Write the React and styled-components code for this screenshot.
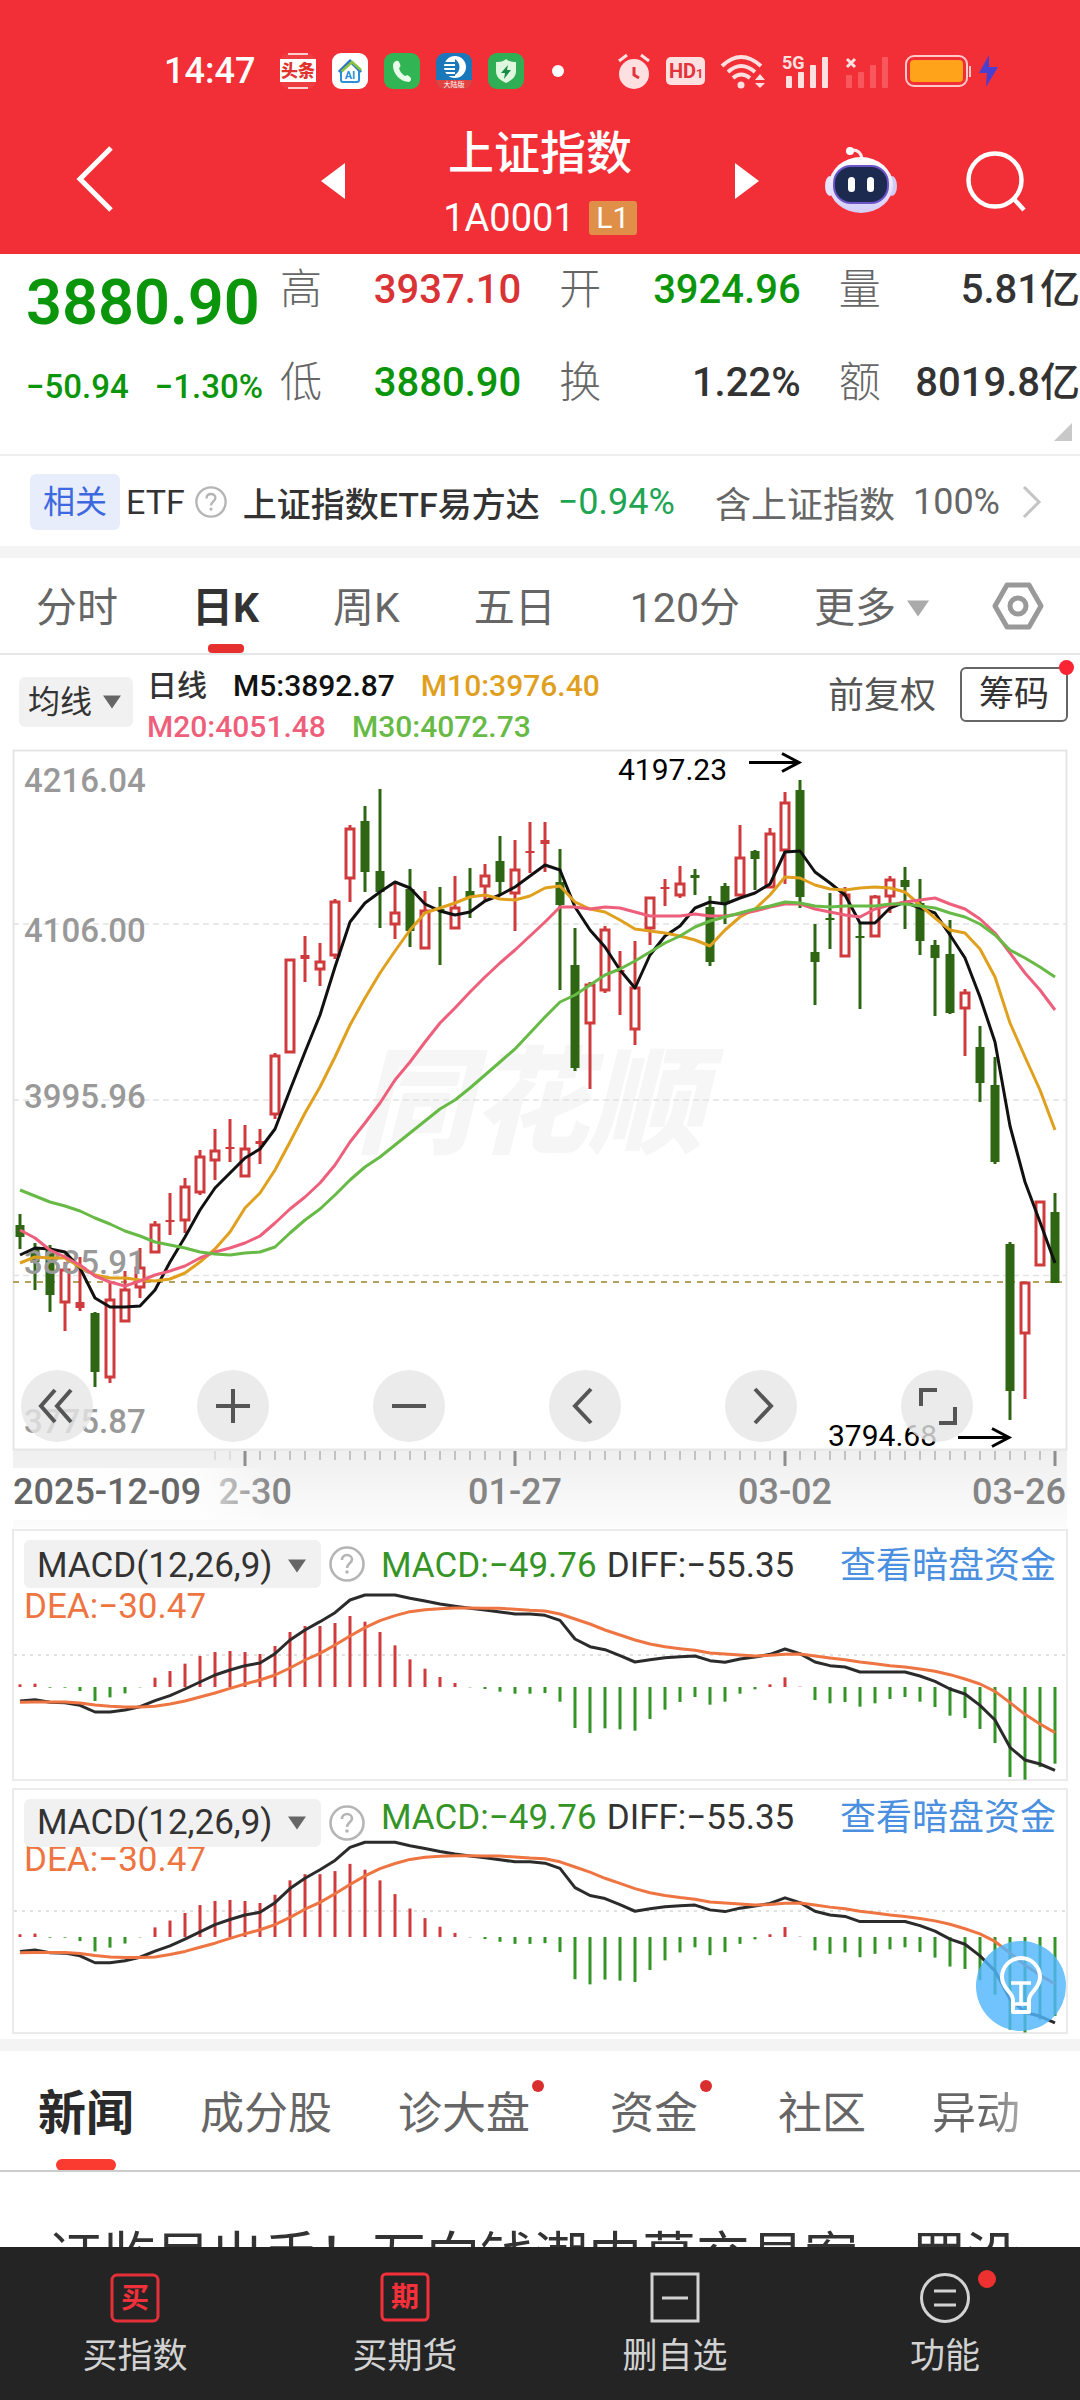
import React from "react";
import styled, { createGlobalStyle, css } from "styled-components";

const GlobalStyle = createGlobalStyle`
  * { box-sizing: border-box; }
  html, body { margin: 0; padding: 0; }
  body {
    background: #fff;
    color: #333;
    font-family: Roboto, "Noto Sans CJK SC", sans-serif;
  }
  button, select, input {
    font: inherit;
    color: inherit;
    margin: 0;
    padding: 0;
    border: 0;
    background: none;
  }
  button { cursor: pointer; }
  a { color: inherit; text-decoration: none; }
  svg { display: block; flex: none; overflow: visible; }
`;

const C = {
  up: "#cf3a3c",
  down: "#2f6614",
  green: "#0a950a",
  red: "#d93335",
  text: "#333",
  sub: "#666",
  m5: "#111",
  m10: "#e0a01e",
  m20: "#ee5f7b",
  m30: "#66ba45",
  diff: "#2b2b2b",
  dea: "#ee7542",
  macd: "#359426",
};

/* ---------- page ---------- */

const Page = styled.div`
  display: flex;
  flex-direction: column;
  height: 100vh;
  overflow: hidden;
`;

const Scroll = styled.main`
  flex: 1;
  min-height: 0;
  overflow-y: auto;
  scrollbar-width: none;
`;

const Band = styled.div`
  height: 12px;
  background: #f4f4f4;
`;

/* ---------- status bar and header ---------- */

const Top = styled.header`
  flex: none;
  background: #f22f37;
  color: #fff;
`;

const StatusBar = styled.div`
  display: flex;
  align-items: center;
  justify-content: space-between;
  height: 94px;
  padding: 48px 80px 0 164px;
`;

const StatusGroup = styled.div`
  display: flex;
  align-items: center;
  gap: 16px;
`;

const Clock = styled.time`
  width: 100px;
  font-size: 36px;
  line-height: 46px;
  font-weight: 500;
`;

const TitleBar = styled.div`
  display: grid;
  grid-template-columns: 1fr auto 1fr;
  align-items: center;
  height: 160px;
  padding: 14px 54px 0;
`;

const IconButton = styled.button`
  display: inline-flex;
  align-items: center;
  justify-content: center;
`;

const TitleBack = styled.div`
  padding-left: 22px;
`;

const TitleCenter = styled.div`
  display: flex;
  align-items: center;
  justify-content: space-between;
  width: 438px;
`;

const TitleText = styled.div`
  display: flex;
  flex-direction: column;
  align-items: center;
  gap: 14px;
  padding-top: 4px;
`;

const Title = styled.h1`
  margin: 0;
  font-size: 46px;
  line-height: 56px;
  font-weight: 500;
`;

const Code = styled.div`
  display: flex;
  align-items: center;
  gap: 14px;
  font-size: 38px;
  line-height: 46px;
`;

const Level = styled.span`
  width: 48px;
  border-radius: 3px;
  background: #e08f48;
  font-size: 30px;
  line-height: 34px;
  text-align: center;
`;

const TitleActions = styled.div`
  display: flex;
  justify-content: flex-end;
  align-items: center;
  gap: 68px;
`;

/* ---------- quote ---------- */

const Quote = styled.section`
  display: grid;
  grid-template-columns: 254px minmax(0, 1fr);
  height: 202px;
  padding-left: 26px;
  border-bottom: 2px solid #eee;
  align-content: start;
`;

const Price = styled.div`
  height: 95px;
  color: ${C.green};
  font-size: 63px;
  line-height: 98px;
  font-weight: 600;
`;

const Change = styled.div`
  display: flex;
  gap: 26px;
  color: ${C.green};
  font-size: 33px;
  line-height: 76px;
  font-weight: 500;
  white-space: nowrap;
`;

const Stats = styled.dl`
  display: grid;
  grid-template-columns: repeat(3, 1fr);
  column-gap: 38px;
  margin: 0;
  padding-top: 12px;
`;

const Stat = styled.div`
  display: flex;
  justify-content: space-between;
  white-space: nowrap;
  line-height: 48px;
  height: 93px;
`;

const StatName = styled.dt`
  color: ${C.sub};
  font-size: 42px;
  font-weight: 300;
`;

const StatValue = styled.dd`
  margin: 0;
  color: ${(p) => p.$color || C.text};
  font-size: 40px;
  font-weight: 500;
`;

const Corner = styled.svg`
  grid-column: 1 / -1;
  justify-self: end;
  margin: -29px 8px 0 0;
`;

/* ---------- related fund ---------- */

const Related = styled.a`
  display: flex;
  align-items: center;
  height: 90px;
  padding: 2px 36px 0 30px;
  white-space: nowrap;
`;

const Tag = styled.span`
  padding: 0 13px;
  margin-right: 6px;
  border-radius: 6px;
  background: #e7edfb;
  color: #3d68e0;
  font-size: 32px;
  line-height: 56px;
`;

const Plain = styled.span`
  margin-right: ${(p) => p.$gap || 0}px;
  color: ${(p) => p.$color || C.text};
  font-size: ${(p) => p.$size || 34}px;
  font-weight: ${(p) => p.$weight || 400};
`;

const Fund = styled(Plain)`
  margin-left: 16px;
`;

/* ---------- period tabs ---------- */

const Periods = styled.nav`
  display: flex;
  align-items: stretch;
  gap: 74px;
  height: 97px;
  padding: 0 36px;
  border-bottom: 2px solid #e6e6e6;
`;

const Period = styled.button`
  display: grid;
  grid-template-rows: 86px 9px;
  justify-items: center;
  align-items: center;
  color: ${(p) => (p.$on ? C.text : C.sub)};
  font-size: 41px;
  font-weight: ${(p) => (p.$on ? 700 : 400)};
  line-height: 60px;
  white-space: nowrap;
  &::after {
    content: "";
    width: 36px;
    height: 9px;
    border-radius: 4px;
    background: ${(p) => (p.$on ? "#e5302f" : "transparent")};
  }
`;

const More = styled.span`
  display: flex;
  align-items: center;
  gap: 11px;
  padding-top: 14px;
`;

const PeriodText = styled.span`
  padding-top: 14px;
`;

const Settings = styled(IconButton)`
  margin-left: -10px;
`;

/* ---------- moving average bar ---------- */

const AverageBar = styled.div`
  display: flex;
  align-items: flex-start;
  height: 95px;
  padding: 12px 12px 0 19px;
`;

const Picker = styled.label`
  display: grid;
  align-items: center;
  width: ${(p) => p.$width}px;
  height: ${(p) => p.$height}px;
  border-radius: 6px;
  background: #f1f1f1;
  & > * { grid-area: 1 / 1; }
  & > svg { justify-self: end; margin-right: ${(p) => p.$inset}px; pointer-events: none; }
`;

const AveragePicker = styled(Picker)`
  margin-top: 10px;
`;

const PickerSelect = styled.select`
  appearance: none;
  width: 100%;
  height: 100%;
  padding-left: ${(p) => p.$pad}px;
  font-size: ${(p) => p.$size}px;
`;

const Legend = styled.div`
  flex: 1;
  display: grid;
  grid-template-rows: 41px 41px;
  padding-left: 14px;
  margin-top: -2px;
`;

const LegendLine = styled.div`
  display: flex;
  gap: 26px;
  font-size: 30px;
  line-height: 41px;
  font-weight: 500;
  white-space: nowrap;
`;

const Tint = styled.span`
  color: ${(p) => p.$color};
`;

const Adjust = styled.button`
  margin-right: 24px;
  color: #555;
  font-size: 36px;
  line-height: 59px;
`;

const Chips = styled.button`
  position: relative;
  width: 108px;
  height: 55px;
  border: 2px solid #666;
  border-radius: 6px;
  font-size: 35px;
  line-height: 51px;
`;

const Dot = styled.span`
  position: absolute;
  top: ${(p) => p.$top}px;
  right: ${(p) => p.$right}px;
  width: ${(p) => p.$size}px;
  height: ${(p) => p.$size}px;
  border-radius: 50%;
  background: ${(p) => p.$color};
`;

/* ---------- charts ---------- */

const ChartBox = styled.section`
  position: relative;
  padding: 0 13px;
  & > svg { width: 100%; height: auto; }
`;

const ChartTools = styled.div`
  position: absolute;
  left: 21px;
  right: 107px;
  bottom: 78px;
  display: flex;
  justify-content: space-between;
`;

const Tool = styled.button`
  display: flex;
  align-items: center;
  justify-content: center;
  width: 72px;
  height: 72px;
  border-radius: 50%;
  background: rgba(230, 230, 230, 0.8);
  color: #555;
`;

const Panels = styled.div`
  display: flex;
  flex-direction: column;
  gap: 7px;
  padding: 9px 12px 5px;
`;

const Panel = styled.section`
  display: grid;
  border: 2px solid #ebebeb;
  & > * { grid-area: 1 / 1; min-width: 0; }
  & > svg { width: 100%; height: auto; }
`;

const PanelHead = styled.div`
  z-index: 1;
  display: flex;
  align-items: flex-start;
  padding: 9px 10px 0;
  font-size: 35px;
  line-height: ${(p) => (p.$tight ? 38 : 52)}px;
  white-space: nowrap;
  align-self: start;
`;

const Help = styled(IconButton)`
  margin: 6px 16px 0 8px;
`;

const Values = styled.div`
  display: flex;
  flex-wrap: wrap;
  gap: 0 10px;
`;

const DeaLine = styled.div`
  align-self: start;
  padding: ${(p) => (p.$tight ? 50 : 56)}px 0 0 10px;
  color: ${C.dea};
  font-size: 35px;
  line-height: 40px;
`;

const DarkPool = styled.a`
  margin-left: auto;
  color: #4a8fe0;
  font-size: 36px;
`;

const PanelArea = styled.div`
  position: relative;
`;

const Bulb = styled.button`
  position: absolute;
  right: 14px;
  bottom: 8px;
  z-index: 2;
  display: flex;
  align-items: center;
  justify-content: center;
  width: 90px;
  height: 90px;
  border-radius: 50%;
  background: rgba(80, 182, 253, 0.82);
`;

/* ---------- news ---------- */

const NewsTabs = styled.nav`
  display: flex;
  gap: 66px;
  height: 121px;
  padding-left: 38px;
  border-bottom: 2px solid #ccc;
  overflow: hidden;
`;

const NewsTab = styled.button`
  position: relative;
  display: grid;
  grid-template-rows: 108px 12px;
  justify-items: center;
  align-items: center;
  flex: none;
  padding-right: ${(p) => (p.$dot ? 14 : 0)}px;
  color: ${(p) => (p.$on ? "#2a2a2a" : C.sub)};
  font-size: ${(p) => (p.$on ? 48 : 44)}px;
  font-weight: ${(p) => (p.$on ? 700 : 400)};
  line-height: 60px;
  ${(p) =>
    p.$fade &&
    css`
      background: linear-gradient(90deg, #666 60%, #aaa);
      background-clip: text;
      color: transparent;
    `}
  &::after {
    content: "";
    width: 60px;
    height: 12px;
    border-radius: 6px;
    background: ${(p) => (p.$on ? "#fb3b30" : "transparent")};
  }
`;

const NewsLabel = styled.span`
  padding-top: 17px;
`;

const Headline = styled.a`
  display: block;
  padding: 51px 48px 0;
  font-size: 54px;
  line-height: 72px;
`;

/* ---------- bottom bar ---------- */

const BottomBar = styled.nav`
  flex: none;
  display: grid;
  grid-template-columns: repeat(4, 1fr);
  height: 153px;
  background: #242424;
  color: #d2d2d2;
`;

const BottomItem = styled.button`
  display: flex;
  flex-direction: column;
  align-items: center;
  gap: 12px;
  padding-top: 26px;
  font-size: 35px;
  line-height: 44px;
`;

const BottomIcon = styled.span`
  position: relative;
  display: block;
`;

/* ---------- market data ---------- */

/* kind, high, body top, body bottom, low: "u" rising, "d" falling */
const CANDLES = [
  ["d", 1214, 1226, 1237, 1249], ["d", 1243, 1250, 1262, 1290], ["d", 1245, 1250, 1295, 1312],
  ["u", 1262, 1270, 1302, 1331], ["u", 1257, 1303, 1308, 1311], ["d", 1312, 1314, 1372, 1387],
  ["u", 1283, 1300, 1377, 1383], ["u", 1271, 1290, 1321, 1321], ["u", 1248, 1268, 1287, 1298],
  ["u", 1221, 1225, 1252, 1252], ["u", 1193, 1221, 1221, 1235], ["u", 1178, 1187, 1220, 1233],
  ["u", 1150, 1157, 1192, 1195], ["u", 1129, 1151, 1160, 1180], ["u", 1119, 1148, 1148, 1162],
  ["u", 1125, 1149, 1176, 1176], ["u", 1129, 1142, 1144, 1164], ["u", 1053, 1056, 1114, 1119],
  ["u", 960, 960, 1052, 1052], ["u", 936, 956, 959, 982], ["u", 943, 962, 969, 986],
  ["u", 899, 902, 955, 959], ["u", 825, 829, 878, 902], ["d", 806, 822, 872, 892],
  ["d", 789, 872, 892, 928], ["u", 883, 913, 924, 939], ["d", 869, 890, 931, 947],
  ["u", 891, 911, 948, 948], ["d", 887, 910, 910, 965], ["u", 876, 908, 928, 928],
  ["d", 868, 892, 897, 918], ["u", 864, 876, 886, 901], ["d", 836, 862, 882, 895],
  ["u", 840, 870, 893, 931], ["u", 822, 852, 852, 873], ["u", 822, 841, 844, 872],
  ["d", 849, 883, 905, 990], ["d", 928, 966, 1068, 1071], ["u", 982, 985, 1023, 1089],
  ["u", 926, 930, 990, 993], ["u", 951, 971, 971, 1015], ["u", 941, 988, 1029, 1045],
  ["u", 897, 898, 928, 945], ["u", 879, 888, 888, 906], ["u", 866, 884, 895, 898],
  ["d", 869, 876, 878, 895], ["d", 896, 908, 962, 966], ["d", 883, 887, 904, 924],
  ["u", 825, 858, 895, 895], ["d", 850, 852, 859, 890], ["u", 828, 834, 887, 887],
  ["u", 792, 803, 850, 884], ["d", 780, 791, 897, 908], ["d", 924, 953, 962, 1005],
  ["d", 893, 919, 919, 949], ["u", 887, 895, 956, 956], ["d", 922, 937, 938, 1009],
  ["u", 895, 897, 936, 936], ["u", 876, 880, 896, 913], ["d", 867, 881, 887, 929],
  ["d", 879, 904, 941, 955], ["d", 940, 946, 958, 1016], ["d", 920, 955, 1013, 1014],
  ["u", 989, 993, 1008, 1056], ["d", 1026, 1048, 1083, 1102], ["d", 1057, 1086, 1162, 1164],
  ["d", 1242, 1245, 1391, 1420], ["u", 1282, 1283, 1333, 1399], ["u", 1201, 1202, 1265, 1265],
  ["d", 1193, 1213, 1283, 1283],
];

const MA5 = [1255, 1248, 1249, 1252, 1268, 1298, 1307, 1307, 1306, 1290, 1262, 1237, 1210, 1188, 1173, 1158, 1149, 1129, 1090, 1052, 1015, 967, 922, 903, 892, 882, 888, 904, 911, 915, 912, 901, 895, 887, 876, 865, 870, 907, 930, 947, 970, 988, 955, 936, 926, 908, 902, 904, 898, 893, 884, 852, 851, 872, 883, 895, 923, 923, 908, 902, 908, 913, 935, 958, 997, 1042, 1126, 1182, 1222, 1263];
const MA10 = [1263, 1257, 1258, 1258, 1267, 1275, 1278, 1278, 1280, 1281, 1279, 1273, 1262, 1249, 1232, 1208, 1193, 1170, 1142, 1113, 1087, 1057, 1025, 998, 973, 951, 930, 913, 908, 903, 897, 895, 899, 900, 896, 888, 886, 902, 909, 912, 920, 929, 931, 933, 936, 940, 946, 930, 917, 909, 895, 877, 878, 885, 889, 890, 888, 887, 888, 892, 905, 918, 930, 933, 949, 977, 1023, 1057, 1090, 1130];
const MA20 = [1230, 1238, 1250, 1257, 1265, 1276, 1282, 1286, 1281, 1275, 1271, 1266, 1258, 1252, 1248, 1243, 1236, 1223, 1209, 1197, 1183, 1165, 1142, 1123, 1103, 1080, 1062, 1042, 1023, 1008, 992, 977, 963, 950, 936, 922, 907, 907, 909, 907, 908, 912, 916, 916, 916, 914, 916, 916, 914, 911, 907, 904, 904, 909, 912, 915, 917, 909, 905, 902, 900, 898, 904, 909, 919, 933, 953, 973, 990, 1010];
const MA30 = [1190, 1196, 1202, 1206, 1211, 1218, 1224, 1231, 1236, 1242, 1245, 1248, 1252, 1254, 1255, 1253, 1252, 1247, 1233, 1220, 1209, 1195, 1180, 1167, 1157, 1145, 1133, 1121, 1109, 1100, 1088, 1075, 1062, 1049, 1033, 1017, 1002, 995, 985, 975, 969, 961, 952, 943, 936, 927, 921, 917, 913, 909, 906, 902, 903, 906, 907, 906, 906, 906, 904, 904, 906, 908, 913, 917, 924, 935, 950, 958, 967, 977];

/* MACD pane: thirds of a unit, histogram measured from its zero line */
const HIST = [8, 10, -2, -2, -12, -42, -31, -19, -1, 28, 48, 70, 93, 105, 108, 105, 99, 123, 165, 183, 183, 192, 213, 196, 165, 125, 83, 55, 30, 12, -1, -6, -14, -20, -20, -18, -44, -123, -138, -124, -127, -131, -96, -68, -45, -30, -53, -44, -20, -7, 8, 29, 1, -39, -49, -45, -59, -49, -36, -30, -44, -60, -86, -93, -126, -168, -270, -278, -240, -230];
const DIFF = [543, 539, 547, 548, 556, 576, 576, 570, 560, 542, 527, 507, 486, 465, 450, 437, 429, 401, 360, 330, 305, 278, 240, 225, 225, 225, 235, 243, 252, 259, 265, 270, 276, 282, 282, 286, 301, 357, 380, 389, 407, 426, 419, 413, 410, 408, 422, 427, 417, 411, 403, 387, 401, 426, 437, 441, 456, 456, 456, 456, 468, 484, 507, 522, 556, 600, 682, 720, 732, 751];
const DEA = [547, 546, 546, 546, 549, 555, 559, 561, 561, 559, 552, 543, 531, 519, 505, 492, 480, 465, 444, 420, 400, 375, 348, 323, 302, 287, 275, 269, 266, 264, 264, 265, 265, 268, 271, 273, 282, 297, 312, 330, 345, 360, 372, 380, 386, 391, 399, 402, 405, 408, 406, 403, 402, 408, 414, 419, 426, 431, 437, 441, 447, 454, 464, 477, 492, 514, 548, 583, 612, 638];

const px = (i) => 20 + 15 * i;
const toPoints = (list, fn) => list.map((v, i) => `${px(i)},${fn ? fn(v) : v}`).join(" ");

function Candle({ index, data }) {
  const [kind, high, top, bottom, low] = data;
  const x = px(index);
  const up = kind === "u";
  const color = up ? C.up : C.down;
  const h = bottom - top;
  return (
    <g stroke={color} fill={color}>
      {up && h > 5 ? (
        <>
          {top - high > 1 && <line x1={x} x2={x} y1={high} y2={top} strokeWidth="3" />}
          {low - bottom > 1 && <line x1={x} x2={x} y1={bottom} y2={low} strokeWidth="3" />}
          <rect x={x - 4} y={top} width="8" height={h} fill="#fff" strokeWidth="3" />
        </>
      ) : (
        <>
          <line x1={x} x2={x} y1={high} y2={low} strokeWidth="3" />
          <rect x={x - 4.5} y={top - 1} width="9" height={Math.max(h + 1, 2)} stroke="none" />
        </>
      )}
    </g>
  );
}

const AXIS_LABELS = [["4216.04", 792], ["4106.00", 942], ["3995.96", 1108], ["3885.91", 1274], ["3775.87", 1433]];

function PriceChart() {
  const font = 'Roboto, "Noto Sans CJK SC", sans-serif';
  return (
    <svg viewBox="13 750 1054 770" role="img" aria-label="上证指数 日K" fontFamily={font}>
      <defs>
        <linearGradient id="axisDown" x1="0" y1="0" x2="0" y2="1">
          <stop offset="0" stopColor="#efefef" />
          <stop offset="1" stopColor="#fcfcfc" />
        </linearGradient>
        <linearGradient id="axisFade" x1="0" y1="0" x2="1" y2="0">
          <stop offset="0" stopColor="#fff" />
          <stop offset="0.7" stopColor="#fff" stopOpacity="0.8" />
          <stop offset="1" stopColor="#fff" stopOpacity="0" />
        </linearGradient>
      </defs>
      <rect x="13" y="1450" width="1054" height="78" fill="url(#axisDown)" />
      <rect x="13.5" y="750.5" width="1053" height="699" fill="#fff" stroke="#e6e6e6" strokeWidth="2" />
      <text x="356" y="1144" fontSize="116" fontWeight="900" fontStyle="italic" fill="#f6f6f6">同花顺</text>
      <g stroke="#e2e2e2" strokeWidth="1.4" strokeDasharray="6 4">
        <line x1="13" x2="1066" y1="924" y2="924" />
        <line x1="13" x2="1066" y1="1100" y2="1100" />
        <line x1="13" x2="1066" y1="1275.5" y2="1275.5" />
      </g>
      <line x1="13" x2="1062" y1="1282" y2="1282" stroke="#b3a160" strokeWidth="2" strokeDasharray="6 6" />
      {CANDLES.map((c, i) => <Candle key={i} index={i} data={c} />)}
      <g fontSize="33" fontWeight="500" fill="#999">
        {AXIS_LABELS.map(([t, y]) => <text key={t} x="24" y={y}>{t}</text>)}
      </g>
      <g fill="none" strokeWidth="3" strokeLinejoin="round">
        <polyline points={toPoints(MA5)} stroke={C.m5} />
        <polyline points={toPoints(MA10)} stroke={C.m10} />
        <polyline points={toPoints(MA20)} stroke={C.m20} />
        <polyline points={toPoints(MA30)} stroke={C.m30} />
      </g>
      <g fontSize="30" fill="#000">
        <text x="618" y="780">4197.23</text>
        <text x="828" y="1446">3794.68</text>
      </g>
      <g fill="none" stroke="#000" strokeWidth="3">
        <path d="M749 762.500H799M782 753.500l17 9-17 9" />
        <path d="M958 1437.500h51M992 1428.500l17 9-17 9" />
      </g>
      {CANDLES.map((_, i) => {
        if (i < 13) return null;
        const major = (i - 15) % 18 === 0;
        return (
          <line
            key={i}
            x1={px(i)}
            x2={px(i)}
            y1="1451"
            y2={major ? 1466 : 1460}
            stroke={major ? "#8e8e8e" : i < 15 ? "#ddd" : "#c2c2c2"}
            strokeWidth={major ? 3 : 2}
          />
        );
      })}
      <g fontSize="36" fontWeight="500" fill="#858585" textAnchor="middle">
        <text x="292" y="1504" textAnchor="end">2-30</text>
        <text x="515" y="1504">01-27</text>
        <text x="785" y="1504">03-02</text>
        <text x="1066" y="1504" textAnchor="end">03-26</text>
      </g>
      <rect x="13" y="1468" width="260" height="52" fill="url(#axisFade)" />
      <text x="13" y="1504" fontSize="36" fontWeight="500" fill="#666">2025-12-09</text>
    </svg>
  );
}

function MacdChart({ height, zero, scale, guide }) {
  const at = (v) => zero + ((v - 501) / 3) * scale;
  return (
    <svg viewBox={`14 0 1052 ${height}`} role="img" aria-label="MACD">
      <line x1="14" x2="1066" y1={guide} y2={guide} stroke="#e0e0e0" strokeWidth="2" strokeDasharray="3 5" />
      {HIST.map((v, i) => (
        <line
          key={i}
          x1={px(i)}
          x2={px(i)}
          y1={zero}
          y2={zero - (v / 3) * scale}
          stroke={v > 0 ? C.up : C.macd}
          strokeWidth="3"
        />
      ))}
      <g fill="none" strokeWidth="3" strokeLinejoin="round">
        <polyline points={toPoints(DIFF, at)} stroke={C.diff} />
        <polyline points={toPoints(DEA, at)} stroke={C.dea} />
      </g>
    </svg>
  );
}

/* ---------- small drawings ---------- */

const Caret = ({ size = 18, color = "#666" }) => (
  <svg width={size} height={Math.round(size * 0.75)} viewBox="0 0 18 13">
    <path d="M0 0h18L9 13z" fill={color} />
  </svg>
);

const HelpIcon = ({ size }) => (
  <svg width={size} height={size} viewBox="0 0 36 36" fill="none" stroke="#b5b5b5">
    <circle cx="18" cy="18" r="16.500" strokeWidth="2.600" />
    <path d="M13 14c0-3 2-5 5-5s5 2 5 4.600c0 3.400-5 4.200-5 8.400" strokeWidth="2.600" />
    <circle cx="18" cy="26" r="1" strokeWidth="1.600" fill="#b5b5b5" />
  </svg>
);

const AppIcons = () => (
  <>
    <svg width="36" height="36" viewBox="0 0 36 36">
      <rect width="36" height="36" rx="9" fill="#ee3d40" />
      <path d="M8 1h20M8 35h20" stroke="#fff" strokeWidth="1.500" />
      <rect y="6" width="36" height="23" fill="#fff" />
      <text x="18" y="24" fontSize="17" fontWeight="900" fill="#e0342f" textAnchor="middle">头条</text>
    </svg>
    <svg width="36" height="36" viewBox="0 0 36 36">
      <rect width="36" height="36" rx="9" fill="#fff" />
      <path d="M7 19 18 8l11 11" fill="none" stroke="#2a72c8" strokeWidth="3" />
      <path d="M9 19 20 9l9 8" fill="none" stroke="#8ac43f" strokeWidth="2.500" />
      <path d="M9 18v9q0 2 2 2h14q2 0 2-2v-9" fill="none" stroke="#2a8fd8" strokeWidth="2" />
      <text x="18" y="26" fontSize="11" fontWeight="700" fill="#2a8fd8" textAnchor="middle">AI</text>
    </svg>
    <svg width="36" height="36" viewBox="0 0 36 36">
      <rect width="36" height="36" rx="9" fill="#31b454" />
      <path d="M12 8c2-1 3 0 4 3s0 3-1 4c1 4 3 6 6 8 2-1 3-1 5 1s1 4-1 5c-9 0-16-9-16-16 0-3 1-4 3-5z" fill="#e9fbe9" />
    </svg>
    <svg width="36" height="36" viewBox="0 0 36 36">
      <rect width="36" height="36" rx="9" fill="#1a78ba" />
      <circle cx="19" cy="14" r="11" fill="#fff" />
      <path d="M8 10h11M7 14h12M8 18h11M11 22h8" stroke="#1a78ba" strokeWidth="2" />
      <path d="M19 6c6 4 6 12 0 16z" fill="#1a78ba" />
      <path d="M0 27h36q-1 9-9 9H9q-8 0-9-9z" fill="#e0433f" />
      <text x="18" y="34" fontSize="7" fill="#fff" textAnchor="middle">大陆版</text>
    </svg>
    <svg width="36" height="36" viewBox="0 0 36 36">
      <rect width="36" height="36" rx="9" fill="#2fae55" />
      <path d="M18 6c3 3 7 3 10 3v9c0 6-4 9-10 12C12 27 8 24 8 18V9c3 0 7 0 10-3z" fill="#dff7df" />
      <path d="m20 12-7 8h4l-1 6 7-9h-4z" fill="#178a45" />
    </svg>
    <svg width="36" height="36" viewBox="0 0 36 36">
      <circle cx="18" cy="18" r="6" fill="#fff" />
    </svg>
  </>
);

const SystemIcons = () => (
  <>
    <svg width="32" height="35" viewBox="0 0 32 35">
      <circle cx="16" cy="20" r="15" fill="#ffe0e0" />
      <path d="M16 13v8l5 3" fill="none" stroke="#e2343a" strokeWidth="3" />
      <path d="m1 7 8-6M31 7l-8-6" stroke="#ffe0e0" strokeWidth="3" />
    </svg>
    <svg width="39" height="28" viewBox="0 0 39 28">
      <rect width="39" height="28" rx="5" fill="#ffe0e0" />
      <text x="3" y="21" fontSize="20" fontWeight="700" fill="#e2343a">HD</text>
      <text x="30" y="21" fontSize="13" fontWeight="700" fill="#e2343a">1</text>
    </svg>
    <svg width="45" height="35" viewBox="0 0 45 35">
      <g fill="none" stroke="#ffe0e0" strokeWidth="4">
        <path d="M1 12q19-18 39 0" />
        <path d="M7 18q13-12 27 0" />
        <path d="M12 24q8-7 17 0" />
      </g>
      <circle cx="20" cy="31" r="3.500" fill="#ffe0e0" />
      <path d="m39 20 5 6H34zM39 34l5-5H34z" fill="#ffe0e0" />
    </svg>
    <svg width="47" height="33" viewBox="0 0 47 33" fill="#ffe0e0">
      <text x="0" y="14" fontSize="18" fontWeight="700">5G</text>
      <rect x="4" y="21" width="6" height="12" rx="1" />
      <rect x="16" y="17" width="6" height="16" rx="1" />
      <rect x="28" y="10" width="6" height="23" rx="1" />
      <rect x="40" y="2" width="6" height="31" rx="1" />
    </svg>
    <svg width="44" height="33" viewBox="0 0 44 33" fill="#f8585d">
      <path d="m2 4 8 8m0-8-8 8" stroke="#ffe0e0" strokeWidth="3" />
      <rect x="1" y="20" width="6" height="13" rx="1" />
      <rect x="13" y="17" width="6" height="16" rx="1" />
      <rect x="25" y="10" width="6" height="23" rx="1" />
      <rect x="37" y="2" width="6" height="31" rx="1" />
    </svg>
    <svg width="95" height="34" viewBox="0 0 95 34">
      <rect x="1" y="2" width="61" height="30" rx="8" fill="none" stroke="#ffc9c9" strokeWidth="2" />
      <rect x="5" y="6" width="53" height="22" rx="4" fill="#ffa31a" />
      <path d="M65 12v11" stroke="#ffc9c9" strokeWidth="2" />
      <path d="m84 1-10 18h8l-1 14 12-20h-9z" fill="#4b3fd0" />
    </svg>
  </>
);

const Robot = () => (
  <svg width="74" height="68" viewBox="0 0 74 68">
    <defs>
      <linearGradient id="shell" x1="0" y1="0" x2="0" y2="1">
        <stop offset="0" stopColor="#fff" />
        <stop offset="1" stopColor="#d3cdf8" />
      </linearGradient>
    </defs>
    <path d="M27 3q9-1 11 8" fill="none" stroke="#fbe9ee" strokeWidth="3" />
    <circle cx="26" cy="4" r="4" fill="#fff" />
    <ellipse cx="6" cy="39" rx="5" ry="10" fill="#e8e2fa" />
    <ellipse cx="68" cy="39" rx="5" ry="10" fill="#d3caf3" />
    <ellipse cx="37" cy="38" rx="32" ry="28" fill="url(#shell)" />
    <rect x="9" y="18" width="56" height="39" rx="18" fill="#6a54c8" />
    <rect x="11" y="20" width="52" height="35" rx="16" fill="#1d2a50" />
    <rect x="24" y="30" width="7" height="15" rx="3.500" fill="#fff" />
    <rect x="43" y="30" width="7" height="15" rx="3.500" fill="#fff" />
  </svg>
);

const stroke = { fill: "none", stroke: "currentColor", strokeWidth: 4 };

const TOOLS = [
  ["最早", "M16 2 2 18l14 16M32 2 18 18l14 16"],
  ["放大", "M18 1v34M1 18h34"],
  ["缩小", "M1 18h34"],
  ["左移", "M24 1 8 18l16 17"],
  ["右移", "M12 1l16 17-16 17"],
  ["全屏", "M2 18V2h16M20 35h16V19"],
];

const STATS = [
  ["高", "3937.10", C.red], ["开", "3924.96", C.green], ["量", "5.81亿"],
  ["低", "3880.90", C.green], ["换", "1.22%"], ["额", "8019.8亿"],
];

const NEWS_TABS = [
  { label: "新闻", on: true }, { label: "成分股" }, { label: "诊大盘", dot: true },
  { label: "资金", dot: true }, { label: "社区" }, { label: "异动", fade: true },
];

function MacdPanel({ id, tight, ...chart }) {
  return (
    <Panel>
      <MacdChart {...chart} />
      <DeaLine $tight={tight}>DEA:−30.47</DeaLine>
      <PanelHead $tight={tight}>
        <Picker $width={297} $height={48} $inset={15} htmlFor={id}>
          <PickerSelect id={id} $pad={13} $size={35} aria-label="指标">
            <option>MACD(12,26,9)</option>
          </PickerSelect>
          <Caret />
        </Picker>
        <Help aria-label="指标说明"><HelpIcon size={36} /></Help>
        <Values>
          <Tint $color={C.macd}>MACD:−49.76</Tint>
          <span>DIFF:−55.35</span>
        </Values>
        <DarkPool href="#funds">查看暗盘资金</DarkPool>
      </PanelHead>
    </Panel>
  );
}

export default function App() {
  return (
    <Page>
      <GlobalStyle />
      <Top>
        <StatusBar>
          <StatusGroup>
            <Clock>14:47</Clock>
            <AppIcons />
          </StatusGroup>
          <StatusGroup><SystemIcons /></StatusGroup>
        </StatusBar>
        <TitleBar>
          <TitleBack>
            <IconButton aria-label="返回">
              <svg width="38" height="66" viewBox="0 0 38 66" fill="none" stroke="#fff" strokeWidth="5">
                <path d="M35 2 4 33l31 31" />
              </svg>
            </IconButton>
          </TitleBack>
          <TitleCenter>
            <IconButton aria-label="上一个">
              <svg width="24" height="36" viewBox="0 0 24 36"><path d="M24 0v36L0 18z" fill="#fff" /></svg>
            </IconButton>
            <TitleText>
              <Title>上证指数</Title>
              <Code>1A0001 <Level>L1</Level></Code>
            </TitleText>
            <IconButton aria-label="下一个">
              <svg width="24" height="36" viewBox="0 0 24 36"><path d="M0 0v36l24-18z" fill="#fff" /></svg>
            </IconButton>
          </TitleCenter>
          <TitleActions>
            <IconButton aria-label="智能助手"><Robot /></IconButton>
            <IconButton aria-label="搜索">
              <svg width="60" height="60" viewBox="0 0 60 60" fill="none" stroke="#fff" strokeWidth="4.500">
                <circle cx="29" cy="29" r="26.500" />
                <path d="m47 47 11 12" />
              </svg>
            </IconButton>
          </TitleActions>
        </TitleBar>
      </Top>

      <Scroll>
        <Quote>
          <div>
            <Price>3880.90</Price>
            <Change><span>−50.94</span><span>−1.30%</span></Change>
          </div>
          <Stats>
            {STATS.map(([name, value, color]) => (
              <Stat key={name}>
                <StatName>{name}</StatName>
                <StatValue $color={color}>{value}</StatValue>
              </Stat>
            ))}
          </Stats>
          <Corner width="18" height="18" viewBox="0 0 18 18"><path d="M18 0v18H0z" fill="#c8c8c8" /></Corner>
        </Quote>

        <Related href="#etf">
          <Tag>相关</Tag>
          <Plain $gap={10}>ETF</Plain>
          <HelpIcon size={32} />
          <Fund $gap={18} $weight={500}>上证指数ETF易方达</Fund>
          <Plain $gap={40} $size={36} $color="#1da553">−0.94%</Plain>
          <Plain $gap={18} $size={36} $color={C.sub}>含上证指数</Plain>
          <Plain $gap={22} $size={36} $color={C.sub}>100%</Plain>
          <svg width="20" height="32" viewBox="0 0 20 32" fill="none" stroke="#c4c4c4" strokeWidth="3">
            <path d="m2 1 15 15L2 31" />
          </svg>
        </Related>
        <Band />

        <Periods>
          {["分时", "日K", "周K", "五日", "120分"].map((t) => (
            <Period key={t} $on={t === "日K"}><PeriodText>{t}</PeriodText></Period>
          ))}
          <Period><More>更多 <Caret size={22} color="#aaa" /></More></Period>
          <Settings aria-label="设置">
            <svg width="50" height="46" viewBox="0 0 50 46" fill="none" stroke="#999" strokeWidth="5">
              <path d="M14 2h22l12 21-12 21H14L2 23z" strokeLinejoin="round" />
              <circle cx="25" cy="23" r="8" />
            </svg>
          </Settings>
        </Periods>

        <AverageBar>
          <AveragePicker $width={114} $height={50} $inset={12} htmlFor="overlay">
            <PickerSelect id="overlay" $pad={9} $size={32} aria-label="主图指标"><option>均线</option></PickerSelect>
            <Caret />
          </AveragePicker>
          <Legend>
            <LegendLine>
              <span>日线</span>
              <Tint $color={C.m5}>M5:3892.87</Tint>
              <Tint $color={C.m10}>M10:3976.40</Tint>
            </LegendLine>
            <LegendLine>
              <Tint $color={C.m20}>M20:4051.48</Tint>
              <Tint $color={C.m30}>M30:4072.73</Tint>
            </LegendLine>
          </Legend>
          <Adjust>前复权</Adjust>
          <Chips>筹码<Dot $top={-9} $right={-8} $size={15} $color="#fb2433" /></Chips>
        </AverageBar>

        <ChartBox>
          <PriceChart />
          <ChartTools>
            {TOOLS.map(([label, d]) => (
              <Tool key={label} aria-label={label}>
                <svg width="36" height="36" viewBox="0 0 36 36" {...stroke}><path d={d} /></svg>
              </Tool>
            ))}
          </ChartTools>
        </ChartBox>

        <PanelArea>
          <Panels>
            <MacdPanel id="macd1" height={248} zero={156} scale={1} guide={124} />
            <MacdPanel id="macd2" tight height={242} zero={147} scale={1.03} guide={121} />
          </Panels>
          <Bulb aria-label="提示">
            <svg width="48" height="60" viewBox="0 0 48 60" fill="none" stroke="#fff" strokeWidth="4">
              <path d="M16 44c0-8-11-11-11-23a19 19 0 0 1 38 0c0 12-11 15-11 23v12H16V44" strokeLinejoin="round" />
              <path d="M14 27h20M24 27v20M16 48h16" strokeWidth="3.500" />
            </svg>
          </Bulb>
        </PanelArea>
        <Band />

        <NewsTabs>
          {NEWS_TABS.map((t) => (
            <NewsTab key={t.label} $on={t.on} $dot={t.dot} $fade={t.fade}>
              <NewsLabel>{t.label}</NewsLabel>
              {t.dot && <Dot $top={29} $right={0} $size={12} $color="#d92f2f" />}
            </NewsTab>
          ))}
        </NewsTabs>
        <Headline href="#news">证监局出手！万向钱潮内幕交易案，罚没</Headline>
      </Scroll>

      <BottomBar>
        <BottomItem>
          <BottomIcon>
            <svg width="50" height="50" viewBox="0 0 50 50">
              <rect x="2" y="2" width="46" height="46" rx="5" fill="none" stroke="#e5303a" strokeWidth="3" />
              <text x="25" y="35" fontSize="28" fontWeight="700" textAnchor="middle" fill="#f0303a">买</text>
            </svg>
          </BottomIcon>
          买指数
        </BottomItem>
        <BottomItem>
          <BottomIcon>
            <svg width="50" height="50" viewBox="0 0 50 50">
              <rect x="2" y="1" width="46" height="46" rx="4" fill="none" stroke="#f5303a" strokeWidth="3" />
              <text x="25" y="34" fontSize="28" fontWeight="700" textAnchor="middle" fill="#f5303a">期</text>
            </svg>
          </BottomIcon>
          买期货
        </BottomItem>
        <BottomItem>
          <BottomIcon>
            <svg width="50" height="50" viewBox="0 0 50 50" fill="none" stroke="#d2d2d2" strokeWidth="3">
              <rect x="2" y="1" width="46" height="47" />
              <path d="M12 25h26" />
            </svg>
          </BottomIcon>
          删自选
        </BottomItem>
        <BottomItem>
          <BottomIcon>
            <svg width="50" height="50" viewBox="0 0 50 50" fill="none" stroke="#d2d2d2" strokeWidth="3">
              <circle cx="25" cy="25" r="23.500" />
              <path d="M14 18h22M14 32h22" />
            </svg>
            <Dot $top={-3} $right={-26} $size={18} $color="#ee3030" />
          </BottomIcon>
          功能
        </BottomItem>
      </BottomBar>
    </Page>
  );
}
